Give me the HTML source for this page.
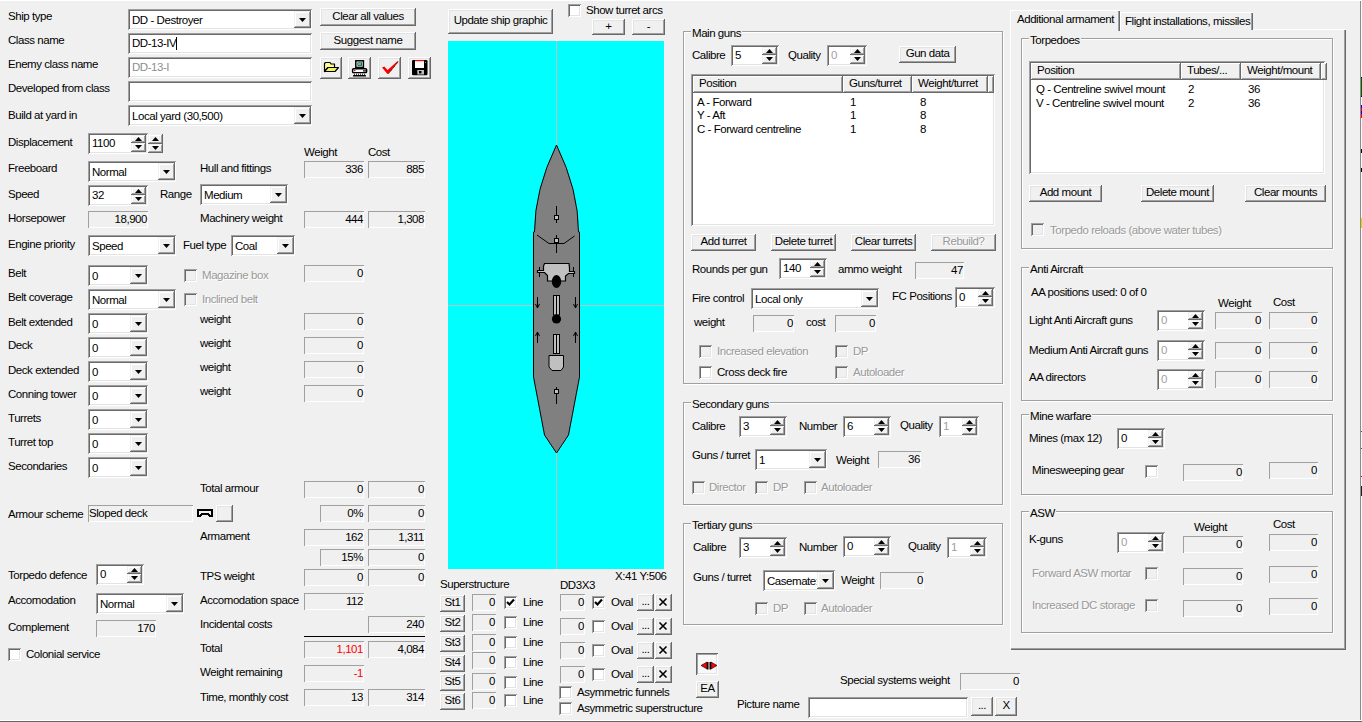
<!DOCTYPE html><html><head><meta charset="utf-8"><style>
*{margin:0;padding:0;box-sizing:border-box}
html,body{width:1362px;height:722px;overflow:hidden;background:#f0f0f0;font-family:"Liberation Sans",sans-serif;font-size:11.5px;letter-spacing:-0.45px;color:#000;position:relative}
.l{position:absolute;white-space:nowrap;line-height:13px}
.dis{color:#999;text-shadow:1px 1px #fff}
.ro{position:absolute;box-shadow:inset 1px 1px #a0a0a0,inset -1px -1px #fff;white-space:nowrap;overflow:hidden}
.ro span{position:absolute;line-height:13px}
.ed{position:absolute;background:#fff;box-shadow:inset 1px 1px #a0a0a0,inset -1px -1px #fff,inset 2px 2px #696969,inset -2px -2px #e3e3e3;white-space:nowrap;overflow:hidden}
.ed span{position:absolute;left:4px;line-height:13px}
.cur{display:inline-block;width:1px;height:13px;background:#000;vertical-align:top}
.cbtn,.sbtn{position:absolute;background:#f0f0f0;box-shadow:inset -1px -1px #696969,inset 1px 1px #f0f0f0,inset -2px -2px #a0a0a0,inset 2px 2px #fff}
.sbtnx{position:absolute;background:#f0f0f0;box-shadow:inset -1px -1px #696969,inset 1px 1px #fff,inset -2px -2px #a0a0a0}
.btn{position:absolute;background:#f0f0f0;box-shadow:inset -1px -1px #696969,inset 1px 1px #fff,inset -2px -2px #a0a0a0,inset 2px 2px #e3e3e3;text-align:center;white-space:nowrap;overflow:hidden}
.btn.dis{color:#999;text-shadow:1px 1px #fff}
.sunkbtn{position:absolute;background:#f0f0f0;box-shadow:inset 1px 1px #696969,inset -1px -1px #fff,inset 2px 2px #a0a0a0,inset -2px -2px #e3e3e3}
.chk{position:absolute;width:13px;height:13px;box-shadow:inset 1px 1px #a0a0a0,inset -1px -1px #fff,inset 2px 2px #696969,inset -2px -2px #e3e3e3}
.gg{position:absolute;border:1px solid #a0a0a0}
.gw{position:absolute;border:1px solid #fff}
.gt{position:absolute;background:#f0f0f0;line-height:13px;padding:0 1px;white-space:nowrap}
.lv{position:absolute;background:#fff;box-shadow:inset 1px 1px #a0a0a0,inset -1px -1px #fff,inset 2px 2px #696969,inset -2px -2px #e3e3e3}
.hd{position:absolute;top:2px;height:17px;background:#f0f0f0;box-shadow:inset -1px -1px #696969,inset 1px 1px #fff,inset -2px -2px #a0a0a0;padding-left:6px;line-height:15px;white-space:nowrap;overflow:hidden}
.lv .hd:first-child{left:2px!important}
.tabpanel{position:absolute;box-shadow:inset 1px 1px #fff,inset -1px -1px #696969,inset -2px -2px #a0a0a0}
.tab{position:absolute;background:#f0f0f0;box-shadow:inset 1px 1px #fff,inset -1px 0 #696969,inset -2px 0 #a0a0a0;padding-left:5px;white-space:nowrap}
.tab.act{padding-left:7px}
</style></head><body><div class="l " style="left:8px;top:10px;">Ship type</div>
<div class="ed" style="left:128px;top:9px;width:184px;height:21px"><span style="top:5px">DD - Destroyer</span><div class="cbtn" style="left:166px;top:2px;width:17px;height:17px"><svg width="7" height="4" style="position:absolute;left:5px;top:7px"><path d="M0 0h7l-3.5 4z" fill="#000"/></svg></div></div>
<div class="l " style="left:8px;top:34px;">Class name</div>
<div class="ed" style="left:128px;top:33px;width:184px;height:21px;"><span style="top:4px">DD-13-IV<i class="cur"></i></span></div>
<div class="l " style="left:8px;top:58px;">Enemy class name</div>
<div class="ed" style="left:128px;top:57px;width:184px;height:21px;color:#8d8d8d;"><span style="top:4px">DD-13-I</span></div>
<div class="l " style="left:8px;top:82px;">Developed from class</div>
<div class="ed" style="left:128px;top:81px;width:184px;height:21px;"><span style="top:4px"></span></div>
<div class="l " style="left:8px;top:109px;">Build at yard in</div>
<div class="ed" style="left:128px;top:105px;width:184px;height:21px"><span style="top:5px">Local yard (30,500)</span><div class="cbtn" style="left:166px;top:2px;width:17px;height:17px"><svg width="7" height="4" style="position:absolute;left:5px;top:7px"><path d="M0 0h7l-3.5 4z" fill="#000"/></svg></div></div>
<div class="btn" style="left:320px;top:8px;width:96px;height:18px;line-height:16px;">Clear all values</div>
<div class="btn" style="left:320px;top:32px;width:96px;height:18px;line-height:16px;">Suggest name</div>
<div class="btn" style="left:320px;top:57px;width:22px;height:22px;line-height:20px;"><svg width="22" height="22" style="position:absolute;left:0;top:0"><path d="M4.5 6.5L5.5 5.5H10L11 7H14.5V10.5H8L4.5 14.5Z" fill="#ffff90" stroke="#000" stroke-width="1.2" stroke-linejoin="round"/><path d="M4.5 14.5L8 10.5H18.5L15 14.5Z" fill="#f4f460" stroke="#000" stroke-width="1.2" stroke-linejoin="round"/></svg></div>
<div class="btn" style="left:348px;top:57px;width:23px;height:22px;line-height:20px;"><svg width="23" height="22" style="position:absolute;left:0;top:0"><rect x="7.8" y="3.8" width="7.6" height="6.6" fill="#fff" stroke="#000" stroke-width="1.5"/><rect x="9.5" y="5.5" width="4.5" height="3.2" fill="#000"/><rect x="10" y="6" width="3.5" height="2.2" fill="#30d0a0"/><rect x="4.6" y="11.8" width="14" height="4" rx="1" fill="#fff" stroke="#000" stroke-width="1.5"/><rect x="15" y="13.3" width="3.5" height="1.2" fill="#000"/><circle cx="6.8" cy="13.6" r="0.8" fill="#f00"/><rect x="5.5" y="16.5" width="12.5" height="1.5" fill="#fff"/><path d="M6 17.2h12" stroke="#000" stroke-dasharray="1 1" stroke-width="1"/><rect x="5" y="18" width="13" height="1.6" rx="0.5" fill="#000"/></svg></div>
<div class="btn" style="left:378px;top:57px;width:23px;height:22px;line-height:20px;"><svg width="23" height="22" style="position:absolute;left:0;top:0"><path d="M4 10.5L6.3 9.6L9.6 13L19.6 4L20.2 4.8L10.8 16.4L9.4 17Z" fill="#f00"/><path d="M20.2 4.8L10.8 16.4" stroke="#000" stroke-width="0.9" stroke-dasharray="1 0.8"/></svg></div>
<div class="btn" style="left:408px;top:57px;width:23px;height:22px;line-height:20px;"><svg width="23" height="22" style="position:absolute;left:0;top:0"><rect x="4" y="3" width="15.5" height="15.3" rx="1.3" fill="#000"/><rect x="7" y="3" width="9" height="8" fill="#fff"/><rect x="7" y="3" width="9" height="1.2" fill="#f00"/><rect x="9.3" y="13" width="6.7" height="4.5" fill="#c0c0c0"/><rect x="11" y="14" width="2.4" height="2.4" fill="#000"/><rect x="17" y="5" width="1" height="1" fill="#888"/></svg></div>
<div class="l " style="left:8px;top:136px;">Displacement</div>
<div class="ed" style="left:88px;top:133px;width:60px;height:21px;color:#000"><span style="top:4px">1100</span><div class="sbtn" style="left:43px;top:2px;width:15px;height:8px"><svg width="7" height="4" style="position:absolute;left:4px;top:2px"><path d="M0 4h7l-3.5-4z" fill="#000"/></svg></div><div class="sbtn" style="left:43px;top:10px;width:15px;height:9px"><svg width="7" height="4" style="position:absolute;left:4px;top:2px"><path d="M0 0h7l-3.5 4z" fill="#000"/></svg></div></div>
<div class="sbtn" style="left:148px;top:134px;width:15px;height:10px"><svg width="7" height="4" style="position:absolute;left:4px;top:3px"><path d="M0 4h7l-3.5-4z" fill="#000"/></svg></div>
<div class="sbtn" style="left:148px;top:144px;width:15px;height:9px"><svg width="7" height="4" style="position:absolute;left:4px;top:2px"><path d="M0 0h7l-3.5 4z" fill="#000"/></svg></div>
<div class="l " style="left:8px;top:162px;">Freeboard</div>
<div class="ed" style="left:88px;top:161px;width:88px;height:21px"><span style="top:5px">Normal</span><div class="cbtn" style="left:70px;top:2px;width:17px;height:17px"><svg width="7" height="4" style="position:absolute;left:5px;top:7px"><path d="M0 0h7l-3.5 4z" fill="#000"/></svg></div></div>
<div class="l " style="left:8px;top:188px;">Speed</div>
<div class="ed" style="left:88px;top:185px;width:60px;height:21px;color:#000"><span style="top:4px">32</span><div class="sbtn" style="left:43px;top:2px;width:15px;height:8px"><svg width="7" height="4" style="position:absolute;left:4px;top:2px"><path d="M0 4h7l-3.5-4z" fill="#000"/></svg></div><div class="sbtn" style="left:43px;top:10px;width:15px;height:9px"><svg width="7" height="4" style="position:absolute;left:4px;top:2px"><path d="M0 0h7l-3.5 4z" fill="#000"/></svg></div></div>
<div class="l " style="left:160px;top:188px;">Range</div>
<div class="ed" style="left:200px;top:184px;width:88px;height:21px"><span style="top:5px">Medium</span><div class="cbtn" style="left:70px;top:2px;width:17px;height:17px"><svg width="7" height="4" style="position:absolute;left:5px;top:7px"><path d="M0 0h7l-3.5 4z" fill="#000"/></svg></div></div>
<div class="l " style="left:8px;top:212px;">Horsepower</div>
<div class="ro" style="left:88px;top:211px;width:60px;height:17px;"><span style="top:2px;right:1px">18,900</span></div>
<div class="l " style="left:8px;top:238px;">Engine priority</div>
<div class="ed" style="left:88px;top:235px;width:88px;height:21px"><span style="top:5px">Speed</span><div class="cbtn" style="left:70px;top:2px;width:17px;height:17px"><svg width="7" height="4" style="position:absolute;left:5px;top:7px"><path d="M0 0h7l-3.5 4z" fill="#000"/></svg></div></div>
<div class="l " style="left:183px;top:239px;">Fuel type</div>
<div class="ed" style="left:231px;top:235px;width:64px;height:21px"><span style="top:5px">Coal</span><div class="cbtn" style="left:46px;top:2px;width:17px;height:17px"><svg width="7" height="4" style="position:absolute;left:5px;top:7px"><path d="M0 0h7l-3.5 4z" fill="#000"/></svg></div></div>
<div class="l " style="left:8px;top:267px;">Belt</div>
<div class="ed" style="left:88px;top:265px;width:60px;height:21px"><span style="top:5px">0</span><div class="cbtn" style="left:42px;top:2px;width:17px;height:17px"><svg width="7" height="4" style="position:absolute;left:5px;top:7px"><path d="M0 0h7l-3.5 4z" fill="#000"/></svg></div></div>
<div class="l " style="left:8px;top:291px;">Belt coverage</div>
<div class="ed" style="left:88px;top:289px;width:88px;height:21px"><span style="top:5px">Normal</span><div class="cbtn" style="left:70px;top:2px;width:17px;height:17px"><svg width="7" height="4" style="position:absolute;left:5px;top:7px"><path d="M0 0h7l-3.5 4z" fill="#000"/></svg></div></div>
<div class="l " style="left:8px;top:316px;">Belt extended</div>
<div class="ed" style="left:88px;top:313px;width:60px;height:21px"><span style="top:5px">0</span><div class="cbtn" style="left:42px;top:2px;width:17px;height:17px"><svg width="7" height="4" style="position:absolute;left:5px;top:7px"><path d="M0 0h7l-3.5 4z" fill="#000"/></svg></div></div>
<div class="l " style="left:8px;top:339px;">Deck</div>
<div class="ed" style="left:88px;top:337px;width:60px;height:21px"><span style="top:5px">0</span><div class="cbtn" style="left:42px;top:2px;width:17px;height:17px"><svg width="7" height="4" style="position:absolute;left:5px;top:7px"><path d="M0 0h7l-3.5 4z" fill="#000"/></svg></div></div>
<div class="l " style="left:8px;top:364px;">Deck extended</div>
<div class="ed" style="left:88px;top:361px;width:60px;height:21px"><span style="top:5px">0</span><div class="cbtn" style="left:42px;top:2px;width:17px;height:17px"><svg width="7" height="4" style="position:absolute;left:5px;top:7px"><path d="M0 0h7l-3.5 4z" fill="#000"/></svg></div></div>
<div class="l " style="left:8px;top:388px;">Conning tower</div>
<div class="ed" style="left:88px;top:385px;width:60px;height:21px"><span style="top:5px">0</span><div class="cbtn" style="left:42px;top:2px;width:17px;height:17px"><svg width="7" height="4" style="position:absolute;left:5px;top:7px"><path d="M0 0h7l-3.5 4z" fill="#000"/></svg></div></div>
<div class="l " style="left:8px;top:412px;">Turrets</div>
<div class="ed" style="left:88px;top:409px;width:60px;height:21px"><span style="top:5px">0</span><div class="cbtn" style="left:42px;top:2px;width:17px;height:17px"><svg width="7" height="4" style="position:absolute;left:5px;top:7px"><path d="M0 0h7l-3.5 4z" fill="#000"/></svg></div></div>
<div class="l " style="left:8px;top:436px;">Turret top</div>
<div class="ed" style="left:88px;top:433px;width:60px;height:21px"><span style="top:5px">0</span><div class="cbtn" style="left:42px;top:2px;width:17px;height:17px"><svg width="7" height="4" style="position:absolute;left:5px;top:7px"><path d="M0 0h7l-3.5 4z" fill="#000"/></svg></div></div>
<div class="l " style="left:8px;top:460px;">Secondaries</div>
<div class="ed" style="left:88px;top:457px;width:60px;height:21px"><span style="top:5px">0</span><div class="cbtn" style="left:42px;top:2px;width:17px;height:17px"><svg width="7" height="4" style="position:absolute;left:5px;top:7px"><path d="M0 0h7l-3.5 4z" fill="#000"/></svg></div></div>
<div class="l " style="left:8px;top:508px;">Armour scheme</div>
<div class="ro" style="left:88px;top:505px;width:105px;height:17px;"><span style="top:2px;left:1px">Sloped deck</span></div>
<div class="l " style="left:8px;top:569px;">Torpedo defence</div>
<div class="ed" style="left:96px;top:564px;width:48px;height:21px;color:#000"><span style="top:4px">0</span><div class="sbtn" style="left:31px;top:2px;width:15px;height:8px"><svg width="7" height="4" style="position:absolute;left:4px;top:2px"><path d="M0 4h7l-3.5-4z" fill="#000"/></svg></div><div class="sbtn" style="left:31px;top:10px;width:15px;height:9px"><svg width="7" height="4" style="position:absolute;left:4px;top:2px"><path d="M0 0h7l-3.5 4z" fill="#000"/></svg></div></div>
<div class="l " style="left:8px;top:594px;">Accomodation</div>
<div class="ed" style="left:96px;top:593px;width:88px;height:21px"><span style="top:5px">Normal</span><div class="cbtn" style="left:70px;top:2px;width:17px;height:17px"><svg width="7" height="4" style="position:absolute;left:5px;top:7px"><path d="M0 0h7l-3.5 4z" fill="#000"/></svg></div></div>
<div class="l " style="left:8px;top:621px;">Complement</div>
<div class="ro" style="left:96px;top:620px;width:60px;height:17px;"><span style="top:2px;right:1px">170</span></div>
<div class="chk" style="left:8px;top:648px;background:#fff"></div>
<div class="l " style="left:26px;top:648px;">Colonial service</div>
<div class="l " style="left:304px;top:146px;">Weight</div>
<div class="l " style="left:368px;top:146px;">Cost</div>
<div class="l " style="left:200px;top:162px;">Hull and fittings</div>
<div class="ro" style="left:304px;top:161px;width:60px;height:17px;"><span style="top:2px;right:1px">336</span></div>
<div class="ro" style="left:368px;top:161px;width:57px;height:17px;"><span style="top:2px;right:1px">885</span></div>
<div class="l " style="left:200px;top:212px;">Machinery weight</div>
<div class="ro" style="left:304px;top:211px;width:60px;height:17px;"><span style="top:2px;right:1px">444</span></div>
<div class="ro" style="left:368px;top:211px;width:57px;height:17px;"><span style="top:2px;right:1px">1,308</span></div>
<div class="chk" style="left:184px;top:269px;background:#f0f0f0"></div>
<div class="l dis" style="left:202px;top:269px;">Magazine box</div>
<div class="ro" style="left:304px;top:265px;width:60px;height:17px;"><span style="top:2px;right:1px">0</span></div>
<div class="chk" style="left:184px;top:293px;background:#f0f0f0"></div>
<div class="l dis" style="left:202px;top:293px;">Inclined belt</div>
<div class="l " style="left:200px;top:313px;">weight</div>
<div class="ro" style="left:304px;top:313px;width:60px;height:17px;"><span style="top:2px;right:1px">0</span></div>
<div class="l " style="left:200px;top:337px;">weight</div>
<div class="ro" style="left:304px;top:337px;width:60px;height:17px;"><span style="top:2px;right:1px">0</span></div>
<div class="l " style="left:200px;top:361px;">weight</div>
<div class="ro" style="left:304px;top:361px;width:60px;height:17px;"><span style="top:2px;right:1px">0</span></div>
<div class="l " style="left:200px;top:385px;">weight</div>
<div class="ro" style="left:304px;top:385px;width:60px;height:17px;"><span style="top:2px;right:1px">0</span></div>
<div class="l " style="left:200px;top:482px;">Total armour</div>
<div class="ro" style="left:304px;top:481px;width:60px;height:17px;"><span style="top:2px;right:1px">0</span></div>
<div class="ro" style="left:368px;top:481px;width:57px;height:17px;"><span style="top:2px;right:1px">0</span></div>
<div class="ro" style="left:320px;top:505px;width:44px;height:17px;"><span style="top:2px;right:1px">0%</span></div>
<div class="ro" style="left:368px;top:505px;width:57px;height:17px;"><span style="top:2px;right:1px">0</span></div>
<svg width="16" height="8" style="position:absolute;left:197px;top:509px" shape-rendering="crispEdges"><g fill="#000"><rect x="0" y="0" width="16" height="2"/><rect x="0" y="0" width="2" height="8"/><rect x="14" y="0" width="2" height="8"/><rect x="0" y="6" width="4" height="2"/><rect x="12" y="6" width="4" height="2"/><rect x="4" y="4" width="8" height="2"/><rect x="3" y="5" width="2" height="2"/><rect x="11" y="5" width="2" height="2"/></g></svg>
<div class="btn" style="left:216px;top:505px;width:17px;height:17px;line-height:15px;"></div>
<div class="l " style="left:200px;top:530px;">Armament</div>
<div class="ro" style="left:304px;top:529px;width:60px;height:17px;"><span style="top:2px;right:1px">162</span></div>
<div class="ro" style="left:368px;top:529px;width:57px;height:17px;"><span style="top:2px;right:1px">1,311</span></div>
<div class="ro" style="left:320px;top:549px;width:44px;height:17px;"><span style="top:2px;right:1px">15%</span></div>
<div class="ro" style="left:368px;top:549px;width:57px;height:17px;"><span style="top:2px;right:1px">0</span></div>
<div class="l " style="left:200px;top:570px;">TPS weight</div>
<div class="ro" style="left:304px;top:569px;width:60px;height:17px;"><span style="top:2px;right:1px">0</span></div>
<div class="ro" style="left:368px;top:569px;width:57px;height:17px;"><span style="top:2px;right:1px">0</span></div>
<div class="l " style="left:200px;top:594px;">Accomodation space</div>
<div class="ro" style="left:304px;top:593px;width:60px;height:17px;"><span style="top:2px;right:1px">112</span></div>
<div class="l " style="left:200px;top:618px;">Incidental costs</div>
<div class="ro" style="left:368px;top:616px;width:57px;height:17px;"><span style="top:2px;right:1px">240</span></div>
<div style="position:absolute;left:304px;top:636px;width:121px;height:1px;background:#000"></div>
<div class="l " style="left:200px;top:642px;">Total</div>
<div class="ro" style="left:304px;top:641px;width:60px;height:17px;color:#f00;"><span style="top:2px;right:1px">1,101</span></div>
<div class="ro" style="left:368px;top:641px;width:57px;height:17px;"><span style="top:2px;right:1px">4,084</span></div>
<div class="l " style="left:200px;top:666px;">Weight remaining</div>
<div class="ro" style="left:304px;top:665px;width:60px;height:17px;color:#f00;"><span style="top:2px;right:1px">-1</span></div>
<div class="l " style="left:200px;top:691px;">Time, monthly cost</div>
<div class="ro" style="left:304px;top:689px;width:60px;height:17px;"><span style="top:2px;right:1px">13</span></div>
<div class="ro" style="left:368px;top:689px;width:57px;height:17px;"><span style="top:2px;right:1px">314</span></div>
<div class="btn" style="left:448px;top:9px;width:105px;height:25px;line-height:23px;">Update ship graphic</div>
<div class="chk" style="left:568px;top:4px;background:#fff"></div>
<div class="l " style="left:586px;top:4px;">Show turret arcs</div>
<div class="btn" style="left:592px;top:19px;width:33px;height:16px;line-height:14px;">+</div>
<div class="btn" style="left:632px;top:19px;width:33px;height:16px;line-height:14px;">-</div>
<svg width="216" height="528" style="position:absolute;left:448px;top:41px">
<g transform="translate(-448,-41)">
<rect x="448" y="41" width="216" height="528" fill="#00ffff"/>
<rect x="556" y="41" width="1" height="528" fill="#c0c0c0"/>
<rect x="448" y="305" width="216" height="1" fill="#c0c0c0"/>
<path d="M556.5 145 Q 534.5 190 534.5 232 L533.5 232 L533.5 377 L544.5 435 L556.5 453 L568.5 435 L579.5 377 L579.5 232 L578.5 232 Q 578.5 190 556.5 145 Z" fill="#808080" stroke="#000" stroke-width="1"/>
<g stroke="#000" stroke-width="1" fill="none" shape-rendering="crispEdges">
<line x1="556.5" y1="206" x2="556.5" y2="223"/>
<line x1="556.5" y1="235" x2="556.5" y2="253"/>
<path d="M537 235 L549 243.5 L564 243.5 L574.5 236" shape-rendering="auto"/>
<line x1="556.5" y1="387" x2="556.5" y2="404"/>
<line x1="539.5" y1="267" x2="539.5" y2="277"/>
<line x1="573.5" y1="267" x2="573.5" y2="277"/>
<line x1="537.5" y1="297" x2="537.5" y2="308"/>
<line x1="575.5" y1="297" x2="575.5" y2="308"/>
<line x1="537.5" y1="332" x2="537.5" y2="343"/>
<line x1="575.5" y1="332" x2="575.5" y2="343"/>
</g>
<path d="M535.5 304l2 4l2-4 M573.5 304l2 4l2-4 M535.5 336l2-4l2 4 M573.5 336l2-4l2 4" stroke="#000" fill="none"/>
<rect x="554.5" y="215.5" width="4" height="4" fill="#c0c0c0" stroke="#000"/>
<rect x="554.5" y="238.5" width="4" height="4" fill="#c0c0c0" stroke="#000"/>
<rect x="554.5" y="389.5" width="4" height="4" fill="#c0c0c0" stroke="#000"/>
<path d="M544.5 263.5 L569 263.5 L569.5 268 L569.5 271.5 L574.5 271.5 L574.5 273.5 L568.5 273.5 L565.5 276 L565.5 281 L547.5 281 L547.5 275.5 L544.5 272.5 L537.5 272.5 L537.5 270.5 L543.5 270.5 L543.5 266 Z" fill="#c0c0c0" stroke="#000" stroke-width="1.2"/>
<ellipse cx="556.5" cy="281.5" rx="4.7" ry="6.5" fill="#000"/>
<rect x="553.5" y="295.5" width="6" height="19.5" fill="#c0c0c0" stroke="#000"/>
<line x1="556.5" y1="296" x2="556.5" y2="315" stroke="#000"/>
<circle cx="556.5" cy="319" r="4.6" fill="#000"/>
<rect x="553.5" y="334.5" width="6" height="19" fill="#c0c0c0" stroke="#000"/>
<line x1="556.5" y1="335" x2="556.5" y2="354" stroke="#000"/>
<path d="M549 355.5 L563.5 355.5 L563.5 367 L561 370.5 L552 370.5 L549 367 Z" fill="#c0c0c0" stroke="#000"/>
</g>
</svg>
<div class="l " style="left:615px;top:570px;">X:41 Y:506</div>
<div class="l " style="left:440px;top:578px;">Superstructure</div>
<div class="l " style="left:560px;top:579px;">DD3X3</div>
<div class="btn" style="left:440px;top:595px;width:25px;height:17px;line-height:15px;">St1</div>
<div class="ro" style="left:472px;top:594px;width:24px;height:17px;"><span style="top:2px;right:1px">0</span></div>
<div class="chk" style="left:504px;top:596px;background:#fff"><svg width="13" height="13" style="position:absolute;left:0;top:0"><path d="M3 6l2.5 2.5l4.5-5" stroke="#000" stroke-width="2.2" fill="none"/></svg></div>
<div class="l " style="left:523px;top:596px;">Line</div>
<div class="btn" style="left:440px;top:615px;width:25px;height:17px;line-height:15px;">St2</div>
<div class="ro" style="left:472px;top:614px;width:24px;height:17px;"><span style="top:2px;right:1px">0</span></div>
<div class="chk" style="left:504px;top:616px;background:#fff"></div>
<div class="l " style="left:523px;top:616px;">Line</div>
<div class="btn" style="left:440px;top:635px;width:25px;height:17px;line-height:15px;">St3</div>
<div class="ro" style="left:472px;top:634px;width:24px;height:17px;"><span style="top:2px;right:1px">0</span></div>
<div class="chk" style="left:504px;top:636px;background:#fff"></div>
<div class="l " style="left:523px;top:636px;">Line</div>
<div class="btn" style="left:440px;top:655px;width:25px;height:17px;line-height:15px;">St4</div>
<div class="ro" style="left:472px;top:652px;width:24px;height:17px;"><span style="top:2px;right:1px">0</span></div>
<div class="chk" style="left:504px;top:656px;background:#fff"></div>
<div class="l " style="left:523px;top:656px;">Line</div>
<div class="btn" style="left:440px;top:674px;width:25px;height:17px;line-height:15px;">St5</div>
<div class="ro" style="left:472px;top:673px;width:24px;height:17px;"><span style="top:2px;right:1px">0</span></div>
<div class="chk" style="left:504px;top:676px;background:#fff"></div>
<div class="l " style="left:523px;top:676px;">Line</div>
<div class="btn" style="left:440px;top:693px;width:25px;height:17px;line-height:15px;">St6</div>
<div class="ro" style="left:472px;top:692px;width:24px;height:17px;"><span style="top:2px;right:1px">0</span></div>
<div class="chk" style="left:504px;top:694px;background:#fff"></div>
<div class="l " style="left:523px;top:694px;">Line</div>
<div class="ro" style="left:560px;top:594px;width:25px;height:17px;"><span style="top:2px;right:1px">0</span></div>
<div class="chk" style="left:592px;top:596px;background:#fff"><svg width="13" height="13" style="position:absolute;left:0;top:0"><path d="M3 6l2.5 2.5l4.5-5" stroke="#000" stroke-width="2.2" fill="none"/></svg></div>
<div class="l " style="left:611px;top:596px;">Oval</div>
<div class="btn" style="left:637px;top:594px;width:17px;height:17px;line-height:15px;">...</div>
<div class="btn" style="left:655px;top:594px;width:17px;height:17px;line-height:15px;"><svg width="17" height="17" style="position:absolute;left:0;top:0"><path d="M4.5 4.5l7 7M11.5 4.5l-7 7" stroke="#000" stroke-width="1.6"/></svg></div>
<div class="ro" style="left:560px;top:618px;width:25px;height:17px;"><span style="top:2px;right:1px">0</span></div>
<div class="chk" style="left:592px;top:620px;background:#fff"></div>
<div class="l " style="left:611px;top:620px;">Oval</div>
<div class="btn" style="left:637px;top:618px;width:17px;height:17px;line-height:15px;">...</div>
<div class="btn" style="left:655px;top:618px;width:17px;height:17px;line-height:15px;"><svg width="17" height="17" style="position:absolute;left:0;top:0"><path d="M4.5 4.5l7 7M11.5 4.5l-7 7" stroke="#000" stroke-width="1.6"/></svg></div>
<div class="ro" style="left:560px;top:642px;width:25px;height:17px;"><span style="top:2px;right:1px">0</span></div>
<div class="chk" style="left:592px;top:644px;background:#fff"></div>
<div class="l " style="left:611px;top:644px;">Oval</div>
<div class="btn" style="left:637px;top:642px;width:17px;height:17px;line-height:15px;">...</div>
<div class="btn" style="left:655px;top:642px;width:17px;height:17px;line-height:15px;"><svg width="17" height="17" style="position:absolute;left:0;top:0"><path d="M4.5 4.5l7 7M11.5 4.5l-7 7" stroke="#000" stroke-width="1.6"/></svg></div>
<div class="ro" style="left:560px;top:666px;width:25px;height:17px;"><span style="top:2px;right:1px">0</span></div>
<div class="chk" style="left:592px;top:668px;background:#fff"></div>
<div class="l " style="left:611px;top:668px;">Oval</div>
<div class="btn" style="left:637px;top:666px;width:17px;height:17px;line-height:15px;">...</div>
<div class="btn" style="left:655px;top:666px;width:17px;height:17px;line-height:15px;"><svg width="17" height="17" style="position:absolute;left:0;top:0"><path d="M4.5 4.5l7 7M11.5 4.5l-7 7" stroke="#000" stroke-width="1.6"/></svg></div>
<div class="chk" style="left:559px;top:686px;background:#fff"></div>
<div class="l " style="left:577px;top:686px;">Asymmetric funnels</div>
<div class="chk" style="left:559px;top:702px;background:#fff"></div>
<div class="l " style="left:577px;top:702px;">Asymmetric superstructure</div>
<div class="gw" style="left:684px;top:32px;width:320px;height:353px"></div>
<div class="gg" style="left:683px;top:31px;width:320px;height:353px"></div>
<div class="gt" style="left:691px;top:27px">Main guns</div>
<div class="l " style="left:692px;top:49px;">Calibre</div>
<div class="ed" style="left:731px;top:45px;width:48px;height:21px;color:#000"><span style="top:4px">5</span><div class="sbtn" style="left:31px;top:2px;width:15px;height:8px"><svg width="7" height="4" style="position:absolute;left:4px;top:2px"><path d="M0 4h7l-3.5-4z" fill="#000"/></svg></div><div class="sbtn" style="left:31px;top:10px;width:15px;height:9px"><svg width="7" height="4" style="position:absolute;left:4px;top:2px"><path d="M0 0h7l-3.5 4z" fill="#000"/></svg></div></div>
<div class="l " style="left:788px;top:49px;">Quality</div>
<div class="ed" style="left:827px;top:45px;width:40px;height:21px;color:#a0a0a0"><span style="top:4px">0</span><div class="sbtn" style="left:23px;top:2px;width:15px;height:8px"><svg width="7" height="4" style="position:absolute;left:4px;top:2px"><path d="M0 4h7l-3.5-4z" fill="#000"/></svg></div><div class="sbtn" style="left:23px;top:10px;width:15px;height:9px"><svg width="7" height="4" style="position:absolute;left:4px;top:2px"><path d="M0 0h7l-3.5 4z" fill="#000"/></svg></div></div>
<div class="btn" style="left:899px;top:46px;width:57px;height:17px;line-height:15px;">Gun data</div>
<div class="lv" style="left:691px;top:74px;width:304px;height:152px"><div class="hd" style="left:0;width:150px">Position</div><div class="hd" style="left:152px;width:69px">Guns/turret</div><div class="hd" style="left:221px;width:76px">Weight/turret</div><div class="hd" style="left:297px;width:5px"></div></div>
<div class="l " style="left:697px;top:96px;">A - Forward</div>
<div class="l " style="left:850px;top:96px;">1</div>
<div class="l " style="left:920px;top:96px;">8</div>
<div class="l " style="left:697px;top:109px;">Y - Aft</div>
<div class="l " style="left:850px;top:109px;">1</div>
<div class="l " style="left:920px;top:109px;">8</div>
<div class="l " style="left:697px;top:123px;">C - Forward centreline</div>
<div class="l " style="left:850px;top:123px;">1</div>
<div class="l " style="left:920px;top:123px;">8</div>
<div class="btn" style="left:691px;top:234px;width:65px;height:17px;line-height:15px;">Add turret</div>
<div class="btn" style="left:771px;top:234px;width:65px;height:17px;line-height:15px;">Delete turret</div>
<div class="btn" style="left:851px;top:234px;width:65px;height:17px;line-height:15px;">Clear turrets</div>
<div class="btn dis" style="left:931px;top:234px;width:65px;height:17px;line-height:15px;">Rebuild?</div>
<div class="l " style="left:692px;top:263px;">Rounds per gun</div>
<div class="ed" style="left:779px;top:258px;width:48px;height:21px;color:#000"><span style="top:4px">140</span><div class="sbtn" style="left:31px;top:2px;width:15px;height:8px"><svg width="7" height="4" style="position:absolute;left:4px;top:2px"><path d="M0 4h7l-3.5-4z" fill="#000"/></svg></div><div class="sbtn" style="left:31px;top:10px;width:15px;height:9px"><svg width="7" height="4" style="position:absolute;left:4px;top:2px"><path d="M0 0h7l-3.5 4z" fill="#000"/></svg></div></div>
<div class="l " style="left:838px;top:263px;">ammo weight</div>
<div class="ro" style="left:915px;top:262px;width:49px;height:17px;"><span style="top:2px;right:1px">47</span></div>
<div class="l " style="left:692px;top:292px;">Fire control</div>
<div class="ed" style="left:751px;top:288px;width:128px;height:21px"><span style="top:5px">Local only</span><div class="cbtn" style="left:110px;top:2px;width:17px;height:17px"><svg width="7" height="4" style="position:absolute;left:5px;top:7px"><path d="M0 0h7l-3.5 4z" fill="#000"/></svg></div></div>
<div class="l " style="left:892px;top:290px;">FC Positions</div>
<div class="ed" style="left:955px;top:287px;width:40px;height:21px;color:#000"><span style="top:4px">0</span><div class="sbtn" style="left:23px;top:2px;width:15px;height:8px"><svg width="7" height="4" style="position:absolute;left:4px;top:2px"><path d="M0 4h7l-3.5-4z" fill="#000"/></svg></div><div class="sbtn" style="left:23px;top:10px;width:15px;height:9px"><svg width="7" height="4" style="position:absolute;left:4px;top:2px"><path d="M0 0h7l-3.5 4z" fill="#000"/></svg></div></div>
<div class="l " style="left:694px;top:316px;">weight</div>
<div class="ro" style="left:753px;top:315px;width:41px;height:17px;"><span style="top:2px;right:1px">0</span></div>
<div class="l " style="left:806px;top:316px;">cost</div>
<div class="ro" style="left:835px;top:315px;width:41px;height:17px;"><span style="top:2px;right:1px">0</span></div>
<div class="chk" style="left:699px;top:345px;background:#f0f0f0"></div>
<div class="l dis" style="left:717px;top:345px;">Increased elevation</div>
<div class="chk" style="left:835px;top:345px;background:#f0f0f0"></div>
<div class="l dis" style="left:853px;top:345px;">DP</div>
<div class="chk" style="left:699px;top:366px;background:#fff"></div>
<div class="l " style="left:717px;top:366px;">Cross deck fire</div>
<div class="chk" style="left:835px;top:366px;background:#f0f0f0"></div>
<div class="l dis" style="left:853px;top:366px;">Autoloader</div>
<div class="gw" style="left:684px;top:403px;width:320px;height:103px"></div>
<div class="gg" style="left:683px;top:402px;width:320px;height:103px"></div>
<div class="gt" style="left:691px;top:398px">Secondary guns</div>
<div class="l " style="left:692px;top:420px;">Calibre</div>
<div class="ed" style="left:739px;top:416px;width:48px;height:21px;color:#000"><span style="top:4px">3</span><div class="sbtn" style="left:31px;top:2px;width:15px;height:8px"><svg width="7" height="4" style="position:absolute;left:4px;top:2px"><path d="M0 4h7l-3.5-4z" fill="#000"/></svg></div><div class="sbtn" style="left:31px;top:10px;width:15px;height:9px"><svg width="7" height="4" style="position:absolute;left:4px;top:2px"><path d="M0 0h7l-3.5 4z" fill="#000"/></svg></div></div>
<div class="l " style="left:799px;top:420px;">Number</div>
<div class="ed" style="left:843px;top:416px;width:48px;height:21px;color:#000"><span style="top:4px">6</span><div class="sbtn" style="left:31px;top:2px;width:15px;height:8px"><svg width="7" height="4" style="position:absolute;left:4px;top:2px"><path d="M0 4h7l-3.5-4z" fill="#000"/></svg></div><div class="sbtn" style="left:31px;top:10px;width:15px;height:9px"><svg width="7" height="4" style="position:absolute;left:4px;top:2px"><path d="M0 0h7l-3.5 4z" fill="#000"/></svg></div></div>
<div class="l " style="left:900px;top:419px;">Quality</div>
<div class="ed" style="left:939px;top:416px;width:40px;height:21px;color:#a0a0a0"><span style="top:4px">1</span><div class="sbtn" style="left:23px;top:2px;width:15px;height:8px"><svg width="7" height="4" style="position:absolute;left:4px;top:2px"><path d="M0 4h7l-3.5-4z" fill="#000"/></svg></div><div class="sbtn" style="left:23px;top:10px;width:15px;height:9px"><svg width="7" height="4" style="position:absolute;left:4px;top:2px"><path d="M0 0h7l-3.5 4z" fill="#000"/></svg></div></div>
<div class="l " style="left:692px;top:449px;">Guns / turret</div>
<div class="ed" style="left:755px;top:449px;width:72px;height:21px"><span style="top:5px">1</span><div class="cbtn" style="left:54px;top:2px;width:17px;height:17px"><svg width="7" height="4" style="position:absolute;left:5px;top:7px"><path d="M0 0h7l-3.5 4z" fill="#000"/></svg></div></div>
<div class="l " style="left:836px;top:454px;">Weight</div>
<div class="ro" style="left:878px;top:451px;width:43px;height:17px;"><span style="top:2px;right:1px">36</span></div>
<div class="chk" style="left:692px;top:481px;background:#f0f0f0"></div>
<div class="l dis" style="left:709px;top:481px;">Director</div>
<div class="chk" style="left:755px;top:481px;background:#f0f0f0"></div>
<div class="l dis" style="left:773px;top:481px;">DP</div>
<div class="chk" style="left:804px;top:481px;background:#f0f0f0"></div>
<div class="l dis" style="left:821px;top:481px;">Autoloader</div>
<div class="gw" style="left:684px;top:524px;width:320px;height:102px"></div>
<div class="gg" style="left:683px;top:523px;width:320px;height:102px"></div>
<div class="gt" style="left:691px;top:519px">Tertiary guns</div>
<div class="l " style="left:693px;top:541px;">Calibre</div>
<div class="ed" style="left:739px;top:537px;width:48px;height:21px;color:#000"><span style="top:4px">3</span><div class="sbtn" style="left:31px;top:2px;width:15px;height:8px"><svg width="7" height="4" style="position:absolute;left:4px;top:2px"><path d="M0 4h7l-3.5-4z" fill="#000"/></svg></div><div class="sbtn" style="left:31px;top:10px;width:15px;height:9px"><svg width="7" height="4" style="position:absolute;left:4px;top:2px"><path d="M0 0h7l-3.5 4z" fill="#000"/></svg></div></div>
<div class="l " style="left:799px;top:541px;">Number</div>
<div class="ed" style="left:843px;top:536px;width:48px;height:21px;color:#000"><span style="top:4px">0</span><div class="sbtn" style="left:31px;top:2px;width:15px;height:8px"><svg width="7" height="4" style="position:absolute;left:4px;top:2px"><path d="M0 4h7l-3.5-4z" fill="#000"/></svg></div><div class="sbtn" style="left:31px;top:10px;width:15px;height:9px"><svg width="7" height="4" style="position:absolute;left:4px;top:2px"><path d="M0 0h7l-3.5 4z" fill="#000"/></svg></div></div>
<div class="l " style="left:908px;top:540px;">Quality</div>
<div class="ed" style="left:947px;top:537px;width:40px;height:21px;color:#a0a0a0"><span style="top:4px">1</span><div class="sbtn" style="left:23px;top:2px;width:15px;height:8px"><svg width="7" height="4" style="position:absolute;left:4px;top:2px"><path d="M0 4h7l-3.5-4z" fill="#000"/></svg></div><div class="sbtn" style="left:23px;top:10px;width:15px;height:9px"><svg width="7" height="4" style="position:absolute;left:4px;top:2px"><path d="M0 0h7l-3.5 4z" fill="#000"/></svg></div></div>
<div class="l " style="left:693px;top:571px;">Guns / turret</div>
<div class="ed" style="left:763px;top:570px;width:72px;height:21px"><span style="top:5px">Casemate:</span><div class="cbtn" style="left:54px;top:2px;width:17px;height:17px"><svg width="7" height="4" style="position:absolute;left:5px;top:7px"><path d="M0 0h7l-3.5 4z" fill="#000"/></svg></div></div>
<div class="l " style="left:841px;top:574px;">Weight</div>
<div class="ro" style="left:880px;top:572px;width:44px;height:17px;"><span style="top:2px;right:1px">0</span></div>
<div class="chk" style="left:755px;top:602px;background:#f0f0f0"></div>
<div class="l dis" style="left:773px;top:602px;">DP</div>
<div class="chk" style="left:804px;top:602px;background:#f0f0f0"></div>
<div class="l dis" style="left:821px;top:602px;">Autoloader</div>
<div class="sunkbtn" style="left:696px;top:653px;width:22px;height:22px;background:#f8f8f8"><svg width="22" height="22" style="position:absolute;left:0;top:0"><path d="M5 12.5L11 9v7z" fill="#f00" stroke="#000" stroke-width="0.6"/><path d="M21 12.5L15 9v7z" fill="#f00" stroke="#000" stroke-width="0.6"/><rect x="11" y="9" width="1.5" height="7.5" fill="#000"/><rect x="13.5" y="9" width="1.5" height="7.5" fill="#000"/></svg></div>
<div class="btn" style="left:696px;top:681px;width:23px;height:17px;line-height:15px;">EA</div>
<div class="l " style="left:840px;top:674px;">Special systems weight</div>
<div class="ro" style="left:960px;top:673px;width:60px;height:17px;"><span style="top:2px;right:1px">0</span></div>
<div class="l " style="left:737px;top:698px;">Picture name</div>
<div class="ed" style="left:808px;top:697px;width:160px;height:21px;"><span style="top:4px"></span></div>
<div class="btn" style="left:971px;top:697px;width:22px;height:19px;line-height:17px;">...</div>
<div class="btn" style="left:995px;top:697px;width:22px;height:19px;line-height:17px;">X</div>
<div class="tabpanel" style="left:1010px;top:29px;width:336px;height:621px"></div>
<div class="tab" style="left:1120px;top:12px;width:133px;height:18px;line-height:18px">Flight installations, missiles</div>
<div class="tab act" style="left:1010px;top:10px;width:110px;height:21px;line-height:19px">Additional armament</div>
<div class="gw" style="left:1022px;top:39px;width:312px;height:211px"></div>
<div class="gg" style="left:1021px;top:38px;width:312px;height:211px"></div>
<div class="gt" style="left:1029px;top:34px">Torpedoes</div>
<div class="lv" style="left:1029px;top:61px;width:296px;height:113px"><div class="hd" style="left:0;width:150px">Position</div><div class="hd" style="left:152px;width:60px">Tubes/...</div><div class="hd" style="left:212px;width:80px">Weight/mount</div><div class="hd" style="left:292px;width:2px"></div></div>
<div class="l " style="left:1036px;top:83px;">Q - Centreline swivel mount</div>
<div class="l " style="left:1188px;top:83px;">2</div>
<div class="l " style="left:1248px;top:83px;">36</div>
<div class="l " style="left:1036px;top:97px;">V - Centreline swivel mount</div>
<div class="l " style="left:1188px;top:97px;">2</div>
<div class="l " style="left:1248px;top:97px;">36</div>
<div class="btn" style="left:1029px;top:185px;width:73px;height:17px;line-height:15px;">Add mount</div>
<div class="btn" style="left:1141px;top:185px;width:73px;height:17px;line-height:15px;">Delete mount</div>
<div class="btn" style="left:1245px;top:185px;width:81px;height:17px;line-height:15px;">Clear mounts</div>
<div class="chk" style="left:1031px;top:223px;background:#f0f0f0"></div>
<div class="l dis" style="left:1050px;top:224px;">Torpedo reloads (above water tubes)</div>
<div class="gw" style="left:1022px;top:268px;width:312px;height:134px"></div>
<div class="gg" style="left:1021px;top:267px;width:312px;height:134px"></div>
<div class="gt" style="left:1029px;top:263px">Anti Aircraft</div>
<div class="l " style="left:1031px;top:286px;">AA positions used: 0 of 0</div>
<div class="l " style="left:1218px;top:297px;">Weight</div>
<div class="l " style="left:1273px;top:296px;">Cost</div>
<div class="l " style="left:1029px;top:314px;">Light Anti Aircraft guns</div>
<div class="ed" style="left:1157px;top:310px;width:48px;height:21px;color:#a0a0a0"><span style="top:4px">0</span><div class="sbtn" style="left:31px;top:2px;width:15px;height:8px"><svg width="7" height="4" style="position:absolute;left:4px;top:2px"><path d="M0 4h7l-3.5-4z" fill="#000"/></svg></div><div class="sbtn" style="left:31px;top:10px;width:15px;height:9px"><svg width="7" height="4" style="position:absolute;left:4px;top:2px"><path d="M0 0h7l-3.5 4z" fill="#000"/></svg></div></div>
<div class="ro" style="left:1215px;top:312px;width:47px;height:17px;"><span style="top:2px;right:1px">0</span></div>
<div class="ro" style="left:1269px;top:312px;width:49px;height:17px;"><span style="top:2px;right:1px">0</span></div>
<div class="l " style="left:1029px;top:344px;">Medium Anti Aircraft guns</div>
<div class="ed" style="left:1157px;top:340px;width:48px;height:21px;color:#a0a0a0"><span style="top:4px">0</span><div class="sbtn" style="left:31px;top:2px;width:15px;height:8px"><svg width="7" height="4" style="position:absolute;left:4px;top:2px"><path d="M0 4h7l-3.5-4z" fill="#000"/></svg></div><div class="sbtn" style="left:31px;top:10px;width:15px;height:9px"><svg width="7" height="4" style="position:absolute;left:4px;top:2px"><path d="M0 0h7l-3.5 4z" fill="#000"/></svg></div></div>
<div class="ro" style="left:1215px;top:342px;width:47px;height:17px;"><span style="top:2px;right:1px">0</span></div>
<div class="ro" style="left:1269px;top:342px;width:49px;height:17px;"><span style="top:2px;right:1px">0</span></div>
<div class="l " style="left:1029px;top:371px;">AA directors</div>
<div class="ed" style="left:1157px;top:369px;width:48px;height:21px;color:#a0a0a0"><span style="top:4px">0</span><div class="sbtn" style="left:31px;top:2px;width:15px;height:8px"><svg width="7" height="4" style="position:absolute;left:4px;top:2px"><path d="M0 4h7l-3.5-4z" fill="#000"/></svg></div><div class="sbtn" style="left:31px;top:10px;width:15px;height:9px"><svg width="7" height="4" style="position:absolute;left:4px;top:2px"><path d="M0 0h7l-3.5 4z" fill="#000"/></svg></div></div>
<div class="ro" style="left:1215px;top:371px;width:47px;height:17px;"><span style="top:2px;right:1px">0</span></div>
<div class="ro" style="left:1269px;top:371px;width:49px;height:17px;"><span style="top:2px;right:1px">0</span></div>
<div class="gw" style="left:1022px;top:415px;width:312px;height:81px"></div>
<div class="gg" style="left:1021px;top:414px;width:312px;height:81px"></div>
<div class="gt" style="left:1029px;top:410px">Mine warfare</div>
<div class="l " style="left:1029px;top:432px;">Mines (max 12)</div>
<div class="ed" style="left:1117px;top:428px;width:48px;height:21px;color:#000"><span style="top:4px">0</span><div class="sbtn" style="left:31px;top:2px;width:15px;height:8px"><svg width="7" height="4" style="position:absolute;left:4px;top:2px"><path d="M0 4h7l-3.5-4z" fill="#000"/></svg></div><div class="sbtn" style="left:31px;top:10px;width:15px;height:9px"><svg width="7" height="4" style="position:absolute;left:4px;top:2px"><path d="M0 0h7l-3.5 4z" fill="#000"/></svg></div></div>
<div class="l " style="left:1032px;top:464px;">Minesweeping gear</div>
<div class="chk" style="left:1145px;top:465px;background:#fff"></div>
<div class="ro" style="left:1183px;top:464px;width:60px;height:17px;"><span style="top:2px;right:1px">0</span></div>
<div class="ro" style="left:1269px;top:462px;width:49px;height:17px;"><span style="top:2px;right:1px">0</span></div>
<div class="gw" style="left:1022px;top:512px;width:312px;height:122px"></div>
<div class="gg" style="left:1021px;top:511px;width:312px;height:122px"></div>
<div class="gt" style="left:1029px;top:507px">ASW</div>
<div class="l " style="left:1194px;top:521px;">Weight</div>
<div class="l " style="left:1273px;top:518px;">Cost</div>
<div class="l " style="left:1029px;top:533px;">K-guns</div>
<div class="ed" style="left:1117px;top:532px;width:48px;height:21px;color:#a0a0a0"><span style="top:4px">0</span><div class="sbtn" style="left:31px;top:2px;width:15px;height:8px"><svg width="7" height="4" style="position:absolute;left:4px;top:2px"><path d="M0 4h7l-3.5-4z" fill="#000"/></svg></div><div class="sbtn" style="left:31px;top:10px;width:15px;height:9px"><svg width="7" height="4" style="position:absolute;left:4px;top:2px"><path d="M0 0h7l-3.5 4z" fill="#000"/></svg></div></div>
<div class="ro" style="left:1183px;top:536px;width:60px;height:17px;"><span style="top:2px;right:1px">0</span></div>
<div class="ro" style="left:1269px;top:534px;width:49px;height:17px;"><span style="top:2px;right:1px">0</span></div>
<div class="l dis" style="left:1032px;top:567px;">Forward ASW mortar</div>
<div class="chk" style="left:1145px;top:567px;background:#f0f0f0"></div>
<div class="ro" style="left:1183px;top:568px;width:60px;height:17px;"><span style="top:2px;right:1px">0</span></div>
<div class="ro" style="left:1269px;top:566px;width:49px;height:17px;"><span style="top:2px;right:1px">0</span></div>
<div class="l dis" style="left:1032px;top:599px;">Increased DC storage</div>
<div class="chk" style="left:1145px;top:599px;background:#f0f0f0"></div>
<div class="ro" style="left:1183px;top:600px;width:60px;height:17px;"><span style="top:2px;right:1px">0</span></div>
<div class="ro" style="left:1269px;top:598px;width:49px;height:17px;"><span style="top:2px;right:1px">0</span></div>
<div style="position:absolute;left:1360px;top:0;width:1px;height:722px;background:#8a8a8a"></div>
<div style="position:absolute;left:1361px;top:0;width:1px;height:722px;background:#f8f8f8"></div>
<div style="position:absolute;left:1361px;top:77px;width:1px;height:20px;background:#000"></div>
<div style="position:absolute;left:1361px;top:78px;width:1px;height:18px;background:#006000"></div>
<div style="position:absolute;left:1361px;top:105px;width:1px;height:3px;background:#00f"></div>
<div style="position:absolute;left:1361px;top:108px;width:1px;height:3px;background:#f00"></div>
<div style="position:absolute;left:1361px;top:111px;width:1px;height:3px;background:#00f"></div>
<div style="position:absolute;left:1361px;top:114px;width:1px;height:4px;background:#f00"></div>
<div style="position:absolute;left:1361px;top:149px;width:1px;height:4px;background:#000"></div>
<div style="position:absolute;left:1361px;top:168px;width:1px;height:4px;background:#000"></div>
<div style="position:absolute;left:1361px;top:218px;width:1px;height:10px;background:#d8d800"></div>
<div style="position:absolute;left:1361px;top:431px;width:1px;height:1px;background:#555"></div>
<div style="position:absolute;left:1361px;top:448px;width:1px;height:1px;background:#555"></div>
<div style="position:absolute;left:1361px;top:476px;width:1px;height:1px;background:#c00"></div>
<div style="position:absolute;left:1361px;top:486px;width:1px;height:10px;background:#222"></div>
<div style="position:absolute;left:0;top:720px;width:1362px;height:1px;background:#fff"></div>
<div style="position:absolute;left:0;top:721px;width:1362px;height:1px;background:#646464"></div>
<div style="position:absolute;left:0;top:0;width:1362px;height:1px;background:#fff"></div></body></html>
